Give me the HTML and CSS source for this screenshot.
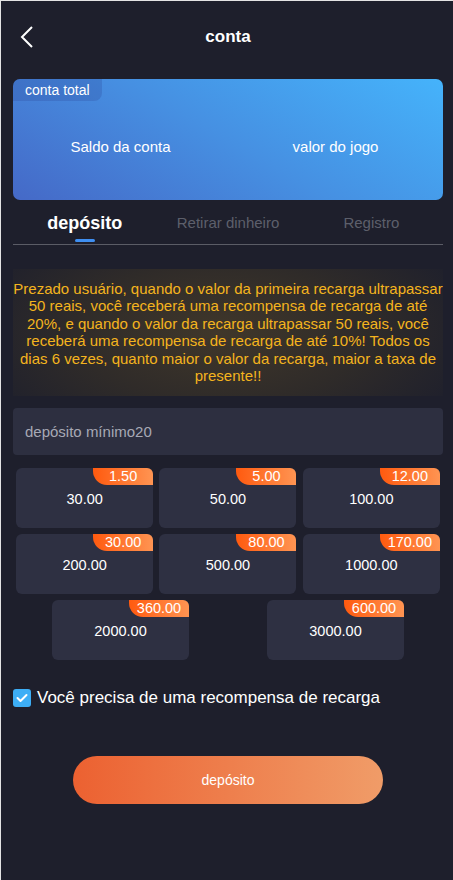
FILE: index.html
```html
<!DOCTYPE html>
<html lang="pt">
<head>
<meta charset="utf-8">
<title>conta</title>
<link rel="stylesheet" href="styles.css">
</head>
<body>
<div class="page">
  <header class="header">
    <svg class="back" width="14" height="22" viewBox="0 0 14 22"><polyline points="12,1 2,11 12,21" fill="none" stroke="#ffffff" stroke-width="2"/></svg>
    <h1 class="title">conta</h1>
    <span></span>
  </header>

  <section class="account-card">
    <div class="card-tab">conta total</div>
    <div class="card-cols">
      <div class="card-col">Saldo da conta</div>
      <div class="card-col">valor do jogo</div>
    </div>
  </section>

  <nav class="tabs">
    <div class="tab active"><span class="tab-label">depósito</span><span class="tab-bar"></span></div>
    <div class="tab"><span class="tab-label">Retirar dinheiro</span></div>
    <div class="tab"><span class="tab-label">Registro</span></div>
  </nav>

  <p class="notice">Prezado usuário, quando o valor da primeira recarga ultrapassar 50 reais, você receberá uma recompensa de recarga de até 20%, e quando o valor da recarga ultrapassar 50 reais, você receberá uma recompensa de recarga de até 10%! Todos os dias 6 vezes, quanto maior o valor da recarga, maior a taxa de presente!!</p>

  <div class="amount-input">depósito mínimo20</div>

  <div class="amounts">
    <div class="amount"><span class="badge">1.50</span>30.00</div>
    <div class="amount"><span class="badge">5.00</span>50.00</div>
    <div class="amount"><span class="badge">12.00</span>100.00</div>
    <div class="amount"><span class="badge">30.00</span>200.00</div>
    <div class="amount"><span class="badge">80.00</span>500.00</div>
    <div class="amount"><span class="badge">170.00</span>1000.00</div>
    <div class="amount"><span class="badge">360.00</span>2000.00</div>
    <div class="amount"><span class="badge">600.00</span>3000.00</div>
  </div>

  <label class="check-row">
    <span class="checkbox"><svg width="12" height="10" viewBox="0 0 12 10"><polyline points="1.5,5 4.5,8 10.5,2" fill="none" stroke="#ffffff" stroke-width="2" stroke-linecap="round" stroke-linejoin="round"/></svg></span>
    <span class="check-text">Você precisa de uma recompensa de recarga</span>
  </label>

  <button class="submit">depósito</button>
</div>
</body>
</html>
```

FILE: styles.css
```css
* { box-sizing: border-box; }
html, body { margin: 0; padding: 0; background: #1e1f2c; }
body { font-family: "Liberation Sans", Arial, sans-serif; color: #ffffff; }

.page {
  min-height: 880px;
  border-top: 1px solid #e4e4e4;
  border-left: 1px solid #e4e4e4;
  background: #1e1f2c;
  padding: 0 10px 0 12px;
}

.header {
  height: 72px;
  display: grid;
  grid-template-columns: 1fr auto 1fr;
  align-items: center;
}
.back { margin-left: 7px; display: block; }
.title { margin: 0; font-size: 17px; font-weight: bold; }

.account-card {
  position: relative;
  margin-top: 6px;
  height: 121px;
  border-radius: 7px;
  background: linear-gradient(30deg, #4569c7 0%, #4690e2 50%, #45b3fb 100%);
  overflow: hidden;
}
.card-tab {
  position: absolute;
  top: 0; left: 0;
  width: 89px; height: 22px;
  line-height: 22px;
  padding-left: 12px;
  font-size: 14px;
  background: rgba(40, 60, 140, 0.22);
  border-radius: 0 0 8px 0;
}
.card-cols {
  display: grid;
  grid-template-columns: 1fr 1fr;
  height: 100%;
  padding-top: 13px;
  align-items: center;
  text-align: center;
  font-size: 15px;
}

.tabs {
  display: grid;
  grid-template-columns: 1fr 1fr 1fr;
  height: 45px;
  border-bottom: 1px solid #5b5c66;
}
.tab {
  display: flex;
  flex-direction: column;
  align-items: center;
  padding-top: 12px;
}
.tab-label { line-height: 22px; font-size: 15px; color: #5d5f6b; }
.tab.active .tab-label { font-size: 18px; font-weight: bold; color: #ffffff; }
.tab-bar { margin-top: 5px; width: 20px; height: 3px; border-radius: 2px; background: #3f8ff2; }

.notice {
  margin: 24px 0 0;
  padding: 11px 0 12px;
  text-align: center;
  font-size: 15px;
  line-height: 17.4px;
  color: #f4b41e;
  background: radial-gradient(ellipse 62% 100% at 48% 50%, #40372a 0%, #2f2b29 55%, #1f202c 100%);
}

.amount-input {
  margin-top: 12px;
  height: 47px;
  line-height: 47px;
  padding-left: 12px;
  border-radius: 4px;
  background: #2d2f40;
  color: #a7a9b5;
  font-size: 15px;
}

.amounts {
  margin-top: 13px;
  display: flex;
  flex-wrap: wrap;
  justify-content: space-around;
  row-gap: 6px;
}
.amount {
  position: relative;
  width: 137px;
  height: 60px;
  border-radius: 6px;
  background: #2e3042;
  display: flex;
  align-items: center;
  justify-content: center;
  padding-top: 2px;
  font-size: 14.5px;
}
.badge {
  position: absolute;
  top: 0; right: 0;
  width: 60px;
  height: 17px;
  line-height: 17px;
  text-align: center;
  font-size: 14.5px;
  border-radius: 0 6px 0 14px;
  background: linear-gradient(90deg, #ff5a0f, #ff9452);
}

.check-row {
  margin-top: 29px;
  display: flex;
  align-items: center;
  height: 18px;
}
.checkbox {
  width: 18px; height: 18px;
  border-radius: 3px;
  background: #3daef6;
  display: flex;
  align-items: center;
  justify-content: center;
}
.check-text { margin-left: 6px; font-size: 17px; }

.submit {
  display: block;
  margin: 49px 0 0 60px;
  width: 310px;
  height: 48px;
  border: 0;
  border-radius: 24px;
  background: linear-gradient(90deg, #ec6131, #f09c68);
  color: #ffffff;
  font-family: "Liberation Sans", Arial, sans-serif;
  font-size: 14px;
}
```
